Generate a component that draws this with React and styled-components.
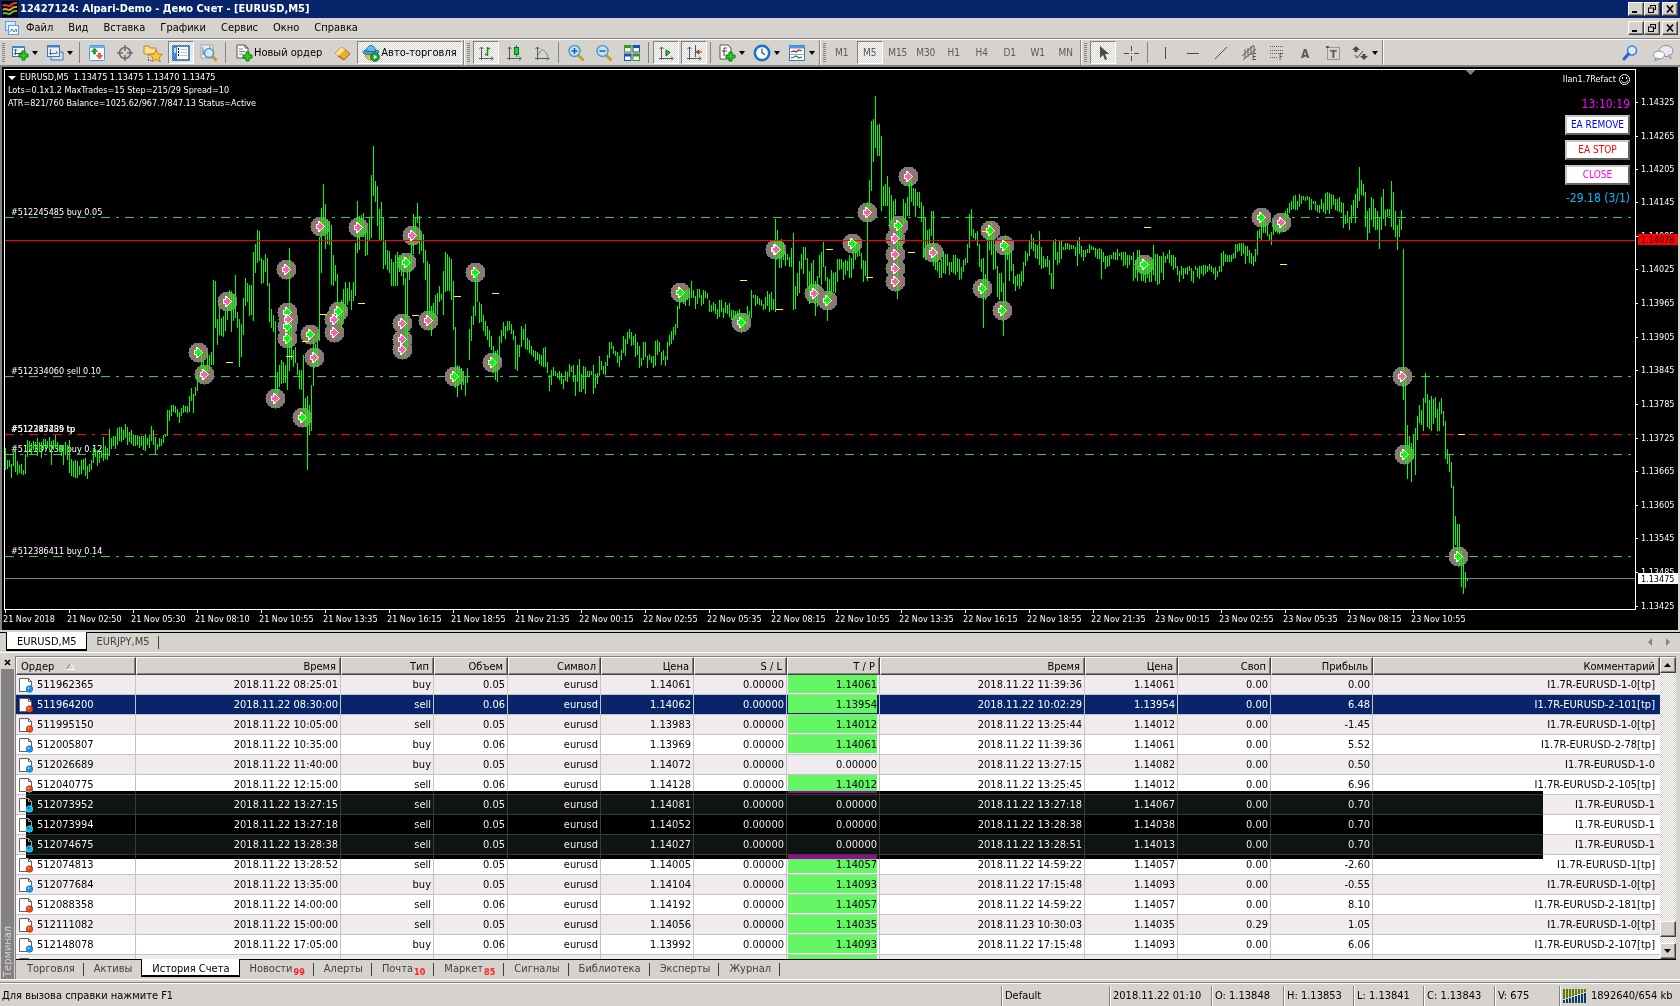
import React from "react";
import styled, { createGlobalStyle, css } from "styled-components";

const face = "#d6d3ce";
const shade = "#848284";
const dark = "#424142";
const navy = "#08246b";

const Global = createGlobalStyle`
  *, *::before, *::after { box-sizing: border-box; }
  body {
    margin: 0;
    background: ${face};
    color: #000;
    font: 11px/14px "DejaVu Sans Condensed", "Noto Sans", sans-serif;
  }
  button { font: inherit; color: inherit; padding: 0; margin: 0; border: 0; background: none; border-radius: 0; }
  svg { display: block; flex: none; }
`;

const raised = css`
  background: ${face};
  border: 1px solid;
  border-color: #fff ${dark} ${dark} #fff;
  box-shadow: inset -1px -1px 0 ${shade};
`;
const checker = css`
  background: repeating-conic-gradient(#fff 0 25%, ${face} 0 50%) 0 0 / 2px 2px;
`;

const Page = styled.div`
  min-height: 100vh;
  display: flex;
  flex-direction: column;
  overflow: hidden;
`;

/* ---------- title and menu ---------- */
const TitleBar = styled.header`
  height: 18px;
  display: flex;
  align-items: center;
  gap: 2px;
  padding: 0 2px;
  background: ${navy};
  color: #fff;
`;
const Title = styled.h1`
  flex: 1;
  margin: 0;
  font-size: 11px;
  line-height: 14px;
  font-weight: bold;
`;
const WindowButtons = styled.div`
  display: flex;
  height: 14px;
`;
const WinButton = styled.button`
  ${raised}
  width: 16px;
  height: 14px;
  display: grid;
  place-items: center;
  &:last-child { margin-left: 2px; }
`;
const MenuBar = styled.nav`
  height: 21px;
  display: flex;
  align-items: center;
  padding: 0 2px 0 5px;
  border-bottom: 1px solid ${shade};
`;
const MenuItems = styled.div`
  flex: 1;
  display: flex;
  gap: 1px;
`;
const MenuItem = styled.button`
  padding: 0 7px;
  line-height: 16px;
`;

/* ---------- toolbar ---------- */
const ToolBar = styled.div`
  height: 28px;
  display: flex;
  align-items: stretch;
  border-top: 1px solid #fff;
  border-bottom: 2px solid ${shade};
`;
const ToolGroup = styled.div`
  display: flex;
  align-items: center;
  border-right: 1px solid ${shade};
  box-shadow: 1px 0 0 #fff;
`;
const Grip = styled.i`
  width: 3px;
  height: 20px;
  margin: 0 2px 0 3px;
  background: repeating-linear-gradient(${shade} 0 1px, ${face} 1px 2px);
`;
const FirstGrip = styled(Grip)`
  margin-left: 2px;
`;
const Divider = styled.i`
  width: 1px;
  height: 21px;
  margin: 0 3px 0 2px;
  background: ${shade};
`;
const ToolButton = styled.button`
  height: 23px;
  min-width: 26px;
  margin: 0 1px;
  display: flex;
  align-items: center;
  justify-content: center;
  gap: ${(p) => (p.$drop ? "3px" : "1px")};
  color: ${(p) => (p.$muted ? "#5a5a5a" : "#000")};
  font-size: ${(p) => (p.$muted ? "10px" : "11px")};
  border: 1px solid transparent;
  ${(p) => p.$wide && css`padding: 0 4px;`}
  ${(p) => p.$drop && css`min-width: 33px;`}
  ${(p) => p.$pressed && css`${checker} border-color: ${shade} #fff #fff ${shade};`}
`;
const Caret = styled.i`
  border: 3px solid transparent;
  border-top: 4px solid #000;
  border-bottom: 0;
`;
const ToolSide = styled.div`
  flex: 1;
  display: flex;
  align-items: center;
  justify-content: flex-end;
  gap: 8px;
  padding-right: 6px;
`;

/* ---------- chart ---------- */
const ChartWindow = styled.section`
  position: relative;
  flex: 1;
  display: grid;
  grid-template-columns: minmax(0, 1fr) 42px;
  grid-template-rows: minmax(541px, 1fr) 20px;
  margin-right: 2px;
  padding: 2px 0 0 2px;
  border-left: 2px solid ${shade};
  background: #000;
  color: #fff;
`;
const Plot = styled.div`
  position: relative;
  border: 1px solid #fff;
  overflow: hidden;
`;
const Drawing = styled.svg`
  width: 100%;
  height: 100%;
  overflow: ${(p) => (p.$open ? "visible" : "hidden")};
  shape-rendering: crispEdges;
  text { font-size: 9px; fill: #fff; white-space: pre; }
`;
const TimeAxis = styled.div`
  grid-column: 1 / -1;
  overflow: visible;
`;
const Quote = styled.div`
  position: absolute;
  left: 3px;
  top: 1px;
  font-size: 9px;
  line-height: 13px;
`;
const QuoteHead = styled.div`
  display: flex;
  align-items: center;
  gap: 4px;
  white-space: pre;
`;
const QuoteCaret = styled.i`
  border: 4px solid transparent;
  border-top: 4px solid #fff;
  border-bottom: 0;
`;
const Expert = styled.div`
  position: absolute;
  right: 5px;
  top: 3px;
  width: 70px;
  display: flex;
  flex-direction: column;
  align-items: flex-end;
`;
const ExpertName = styled.div`
  display: flex;
  align-items: center;
  gap: 3px;
  font-size: 9px;
  line-height: 12px;
`;
const ExpertFigure = styled.div`
  width: 100%;
  text-align: right;
  white-space: nowrap;
  font-size: 12px;
  line-height: 14px;
  color: ${(p) => p.$color};
  margin: ${(p) => (p.$first ? "12px 0 4px" : "1px 0 0")};
`;
const ExpertButton = styled.button`
  width: 65px;
  height: 20px;
  margin-bottom: 5px;
  background: #fff;
  border: 2px solid;
  border-color: #c6c6c6 #636363 #636363 #c6c6c6;
  color: ${(p) => p.$color};
  font-size: 10px;
  line-height: 14px;
  white-space: nowrap;
`;

/* ---------- tabs ---------- */
const TabStrip = styled.div`
  display: flex;
  align-items: flex-start;
  border-top: 1px solid #000;
  color: #424142;
  height: ${(p) => p.$height}px;
  padding-left: ${(p) => p.$inset}px;
`;
const Tab = styled.button`
  position: relative;
  display: flex;
  height: 19px;
  padding: 2px 9px 0 10px;
  white-space: nowrap;
  ${(p) => p.$active
    ? css`
        height: ${p.$tall ? "19px" : "18px"};
        margin-top: -1px;
        padding-top: 3px;
        background: #fff;
        color: #000;
        border: solid #000;
        border-width: 0 1px 2px 1px;
      `
    : css`
        &::after {
          content: "";
          position: absolute;
          right: 0;
          top: 3px;
          height: 13px;
          border-right: 1px solid #424142;
          display: ${p.$beforeActive ? "none" : "block"};
        }
      `}
`;
const Badge = styled.b`
  margin-left: 1px;
  font: bold 9px/20px "DejaVu Sans Condensed", sans-serif;
  color: #ff2020;
`;
const ChartTabs = styled(TabStrip)`
  margin-top: 2px;
  border-bottom: 1px solid #fff;
`;
const TabScroll = styled.div`
  margin-left: auto;
  padding: 5px 10px 0 0;
  display: flex;
  gap: 14px;
`;

/* ---------- terminal ---------- */
const Terminal = styled.section`
  display: flex;
  margin-top: 3px;
  padding-right: 4px;
  height: 324px;
  border-bottom: 1px solid #fff;
`;
const Gutter = styled.aside`
  width: 15px;
  padding-left: 1px;
  display: flex;
  flex-direction: column;
`;
const CloseX = styled.button`
  height: 13px;
  width: 12px;
  display: grid;
  place-items: center;
`;
const GutterTitle = styled.div`
  flex: 1;
  width: 13px;
  background: ${shade};
  color: ${face};
  writing-mode: vertical-rl;
  transform: rotate(180deg);
  line-height: 13px;
  padding-top: 2px;
`;
const TerminalMain = styled.div`
  flex: 1;
  min-width: 0;
  border-left: 1px solid ${shade};
  border-top: 1px solid ${shade};
`;
const ListBox = styled.div`
  position: relative;
  height: 302px;
  overflow: hidden;
  display: flex;
`;
const TableWrap = styled.div`
  flex: 1;
  min-width: 0;
  overflow: hidden;
`;
const Table = styled.table`
  width: 100%;
  table-layout: fixed;
  border-collapse: separate;
  border-spacing: 0;
`;
const Th = styled.th`
  height: 18px;
  padding: ${(p) => (p.$left ? "1px 0 1px 4px" : "1px 4px 1px 0")};
  text-align: ${(p) => (p.$left ? "left" : "right")};
  font-weight: normal;
  line-height: 13px;
  background: ${face};
  border: 1px solid;
  border-color: #fff ${dark} ${dark} #fff;
  box-shadow: inset -1px -1px 0 ${shade};
`;
const SortMark = styled.svg`
  display: inline-block;
  margin-left: 12px;
`;
const Row = styled.tr`
  background: ${(p) => (p.$selected ? navy : p.$alt ? "#efebef" : "#fff")};
  color: ${(p) => (p.$selected ? "#fff" : "#000")};
`;
const Td = styled.td`
  height: 20px;
  padding: 0 2px 0 0;
  text-align: right;
  line-height: 18px;
  white-space: nowrap;
  border-right: 1px solid #c6c3c6;
  border-bottom: 1px solid #c6c3c6;
  &:last-child { border-right: 0; padding-right: 5px; }
`;
const OrderCell = styled.div`
  display: flex;
  align-items: center;
  gap: 4px;
  padding-left: 3px;
`;
const Target = styled.div`
  height: 18px;
  margin: 0 0 1px 1px;
  line-height: 20px;
  background: ${(p) => (p.$hit ? "#63f763" : "none")};
  color: ${(p) => (p.$hit ? "#000" : "inherit")};
`;
const Inverted = styled.div`
  position: absolute;
  left: 10px;
  right: 133px;
  top: 134px;
  height: 68px;
  background: #fff;
  mix-blend-mode: difference;
  pointer-events: none;
`;
const Scroll = styled.div`
  ${checker}
  width: 16px;
  display: flex;
  flex-direction: column;
`;
const ScrollButton = styled.button`
  ${raised}
  height: 16px;
  display: grid;
  place-items: center;
`;
const Thumb = styled(ScrollButton)`
  margin: auto 0 6px;
`;

/* ---------- status bar ---------- */
const StatusBar = styled.footer`
  display: flex;
  align-items: stretch;
  height: 24px;
  margin-top: 2px;
  padding: 3px 0 0;
  border-top: 1px solid ${shade};
  box-shadow: inset 0 1px 0 #fff;
`;
const StatusText = styled.div`
  flex: 1;
  padding: 3px 2px;
`;
const StatusPart = styled.div`
  width: ${(p) => p.$w}px;
  display: flex;
  gap: 4px;
  padding: 3px 0 0 3px;
  white-space: nowrap;
  border-left: 1px solid ${shade};
  box-shadow: inset 1px 0 0 #fff;
`;

/* ---------- icons ---------- */
const Svg = ({ w = 18, h = 18, children }) => (
  <svg width={w} height={h} viewBox={`0 0 ${w} ${h}`} fill="none" aria-hidden="true">{children}</svg>
);
const Plus = ({ x, y }) => (
  <path transform={`translate(${x} ${y})`} d="M4 1h3v3h3v3H7v3H4V7H1V4h3z" fill="#22d422" stroke="#087808" />
);
const Axes = () => (
  <path d="M4.5 3v13M2 14.5h14M2.5 5l2-2 2 2M14 12.5l2 2-2 2" stroke="#5a5a5a" />
);
const ic = {
  newChart: <Svg><rect x="1.5" y="2.5" width="12" height="10" fill="#e8f3ff" stroke="#3a78b8" /><path d="M1 3h13" stroke="#3a88d8" strokeWidth="2" /><path d="M4.500 5v6M3 9.500h8M10 8l1 1.500-1 1.500M3 6.500l1.500-1.500L6 6.500" stroke="#556" /><Plus x={7} y={6} /></Svg>,
  profiles: <Svg><path d="M5 8h12v8H5z" fill="#cfe4fa" stroke="#3a78b8" /><rect x="1.500" y="1.500" width="12" height="11" fill="#e8f3ff" stroke="#3a78b8" /><path d="M1 2.500h13" stroke="#3a88d8" strokeWidth="2" /><path d="M4.500 5v6M3 9.500h8M10 7l2 2.500" stroke="#667" /></Svg>,
  market: <Svg><rect x="1.500" y="1.500" width="15" height="15" rx="1" fill="#f4faff" stroke="#4a98e0" /><path d="M1 3h16" stroke="#68b0f0" strokeWidth="2" /><path d="M6.500 4l3 3.500h-2V10h-2V7.500h-2z" fill="#1fa83a" stroke="#0c7820" strokeWidth=".6" /><path d="M11.500 15l-3-3.500h2V9h2v2.500h2z" fill="#f06a3a" stroke="#c03a10" strokeWidth=".6" /></Svg>,
  cross: <Svg><circle cx="9" cy="9" r="5.500" stroke="#6a6a6a" strokeWidth="1.500" /><path d="M9 1v6M9 11v6M1 9h6M11 9h6" stroke="#6a6a6a" strokeWidth="1.500" /></Svg>,
  navigator: <Svg w={20} h={18}><path d="M1 2h5l1 2h6v6H1z" fill="#ffe08a" stroke="#b88a20" /><path d="M5.500 11v6M5 16.500h6" stroke="#555" strokeDasharray="1 1" /><path d="M13 6l2 4 4.500.4-3.300 3 1 4.300L13 15.400 8.800 17.700l1-4.300-3.300-3L11 10z" fill="#ffc93a" stroke="#a87a10" strokeWidth=".8" /></Svg>,
  terminal: <Svg w={18} h={16}><rect x="1" y="1" width="16" height="14" fill="#fff" stroke="#2060a8" strokeWidth="1.500" /><path d="M1 1h4v14H1z" fill="#3a88e0" /><path d="M2 3h2v5H2z" fill="#bfe0ff" /><path d="M6 3h1v2H6zM6 6h1v2H6zM6 9h1v2H6z" fill="#111" /><path d="M8 4.500h7M8 7.500h7M8 10.500h7" stroke="#b8c8dc" /></Svg>,
  tester: <Svg><path d="M1 1h12v13H1z" fill="#e8f3ff" stroke="#98a8b8" /><path d="M3 3v8M3 10l3-4 2 3M10 2v3" stroke="#778" /><circle cx="9" cy="9" r="4.500" fill="#cfe8ff" fillOpacity=".85" stroke="#5a92c0" strokeWidth="1.500" /><path d="M12.500 12.500l4 4" stroke="#c8962a" strokeWidth="3" /></Svg>,
  order: <Svg><path d="M2 1h8l3 3v10H2z" fill="#fff" stroke="#555" /><path d="M10 1v3h3" stroke="#555" /><path d="M4 5h4M4 7.500h6M4 10h4" stroke="#777" /><Plus x={7} y={7} /></Svg>,
  gold: <Svg><path d="M2 9l7-6 8 7-6 6z" fill="#e8b030" stroke="#98680a" /><path d="M2 9l7-6 3 3-7 6z" fill="#ffe28a" /><path d="M5 12l6 4 6-6" stroke="#98680a" /></Svg>,
  auto: <Svg><path d="M3 9c0 4 3 7 6 7s6-3 6-7z" fill="#f0c430" stroke="#b08a18" /><ellipse cx="9" cy="8" rx="8" ry="2.800" fill="#48a0d8" stroke="#1c6aa8" /><path d="M4.500 7.500C5 3 7 1.500 9 1.500s4 1.500 4.500 6z" fill="#68bce8" stroke="#1c6aa8" /><circle cx="13" cy="13" r="4.300" fill="#20a838" stroke="#0a7020" /><path d="M11.800 10.800l3.400 2.200-3.400 2.200z" fill="#fff" /></Svg>,
  bars: <Svg><Axes /><path d="M10.500 3v9M8 10.500h2M11 4.500h2" stroke="#149020" strokeWidth="1.500" /></Svg>,
  candle: <Svg><Axes /><path d="M11.500 1v12" stroke="#149020" /><rect x="9.500" y="3.500" width="4" height="7" fill="#22d040" stroke="#087018" /></Svg>,
  line: <Svg><Axes /><path d="M5 11c2-4 4-6 5-5s3 2 5 6" stroke="#30a030" /></Svg>,
  zoomIn: <Svg><path d="M11 11l5.500 5.500" stroke="#c8a020" strokeWidth="3" /><circle cx="7.500" cy="7" r="5.500" fill="#bfe2fa" stroke="#5a9ac8" strokeWidth="1.500" /><path d="M4.500 7h6M7.500 4v6" stroke="#1a5ca8" strokeWidth="1.500" /></Svg>,
  zoomOut: <Svg><path d="M11 11l5.500 5.500" stroke="#c8a020" strokeWidth="3" /><circle cx="7.500" cy="7" r="5.500" fill="#bfe2fa" stroke="#5a9ac8" strokeWidth="1.500" /><path d="M4.500 7h6" stroke="#1a5ca8" strokeWidth="1.500" /></Svg>,
  tile: <Svg><path d="M1 1h7.500v7.500H1zM9.500 9.500H17V17H9.500z" fill="#3a9a18" /><path d="M9.500 1H17v7.500H9.500zM1 9.500h7.500V17H1z" fill="#1c50c0" /><path d="M2 4h5.500v3.500H2zM10.500 4H16v3.500h-5.500zM2 12.500h5.500V16H2zM10.500 12.500H16V16h-5.500z" fill="#f4fbff" /></Svg>,
  autoScroll: <Svg><Axes /><path d="M9 6l4 2.500L9 12z" fill="#22c040" stroke="#087018" /></Svg>,
  shift: <Svg><Axes /><path d="M10.500 1v12" stroke="#2a5ca0" /><path d="M17 8h-3M14 6l-3 2 3 2z" fill="#c83810" stroke="#c83810" /></Svg>,
  indicator: <Svg><path d="M2 1h8l3 3v11H2z" fill="#fff" stroke="#555" /><path d="M6 12V4h3M4 7h5" stroke="#444" /><Plus x={7} y={7} /></Svg>,
  clock: <Svg><circle cx="9" cy="9" r="7.200" fill="#f4faff" stroke="#1c70c8" strokeWidth="2.500" /><path d="M9 4.500V9l3 1.500" stroke="#445" strokeWidth="1.200" /></Svg>,
  template: <Svg><rect x="1.500" y="1.500" width="15" height="15" fill="#fff" stroke="#3a78b8" /><path d="M1 3h16" stroke="#4a98e8" strokeWidth="3" /><path d="M2 10.500h14" stroke="#88b0d8" /><path d="M3 8l3-1 2 1 3-2 3 1" stroke="#a02a10" strokeWidth="1.300" /><path d="M3 14l3-1 2-1 3 2 3-1" stroke="#18882a" strokeWidth="1.300" /></Svg>,
  cursor: <Svg><path d="M6 2v12l3-3 2 5 2-1-2-5h4z" fill="#4a4a4a" /></Svg>,
  crosshair: <Svg><path d="M9.500 2v5M9.500 12v5M2 9.500h5M12 9.500h5M9 9.500h1" stroke="#4a4a4a" /></Svg>,
  vline: <Svg><path d="M9.500 3v12" stroke="#4a4a4a" /></Svg>,
  hline: <Svg><path d="M3 9.500h12" stroke="#4a4a4a" /></Svg>,
  slope: <Svg><path d="M3 15L15 3" stroke="#4a4a4a" /></Svg>,
  channel: <Svg><path d="M2 12L14 1M3 16L16 5M5 5v9M8 4v9M11 2v9M14 2v7" stroke="#5a5a5a" /><text x="12" y="16" fontSize="8" fill="#333">E</text></Svg>,
  fibo: <Svg><path d="M2 2.500h13M2 6.500h13M2 9.500h13M2 13.500h8" stroke="#5a5a5a" strokeDasharray="1 1" /><text x="11" y="16" fontSize="8" fill="#333">F</text></Svg>,
  letter: <Svg><text x="5" y="14" fontSize="12" fontWeight="bold" fill="#5a5a5a">A</text></Svg>,
  label: <Svg><rect x="3.500" y="3.500" width="12" height="12" stroke="#5a5a5a" strokeDasharray="1 1" /><path d="M2 2h3v2H2z" fill="#5a5a5a" /><text x="6" y="14" fontSize="11" fontWeight="bold" fill="#5a5a5a">T</text></Svg>,
  shapes: <Svg><path d="M5 2l4 4H6.500v2h-3V6H1zM13 16l-4-4h2.500v-2h3v2H17z" fill="#4a4a4a" /><path d="M4 11l2 3 6-7" stroke="#4a4a4a" /></Svg>,
  search: <Svg><circle cx="11" cy="6.500" r="4.500" fill="#d8ecff" stroke="#3a7ae0" strokeWidth="1.500" /><path d="M7.500 10L3 15" stroke="#2a60d0" strokeWidth="3" strokeLinecap="round" /></Svg>,
  chat: <Svg w={22} h={18}><ellipse cx="14" cy="7" rx="7" ry="5.500" fill="#e8e8ee" stroke="#909098" /><path d="M16 12l3 3-1-5z" fill="#e8e8ee" stroke="#909098" /><ellipse cx="7" cy="11" rx="5.500" ry="4" fill="#fafaff" stroke="#909098" /><path d="M4 14l-1 3 4-2z" fill="#fafaff" stroke="#909098" /></Svg>,
};

const AppIcon = () => (
  <Svg w={16} h={16}>
    <rect width="16" height="16" fill="#000" />
    <path d="M1 5c3-3 5 2 8-1s4-2 6-2" stroke="#e83a20" strokeWidth="2" />
    <path d="M1 9c3-3 5 2 8-1s4-2 6-2" stroke="#e8a020" strokeWidth="2" />
    <path d="M1 13c3-3 5 2 8-1s4-2 6-2" stroke="#58c030" strokeWidth="2" />
  </Svg>
);
const DocIcon = () => (
  <Svg w={14} h={14}>
    <rect x=".5" y=".5" width="10" height="9" fill="#d8ecff" stroke="#5aa0e0" />
    <rect x="3.500" y="4.500" width="10" height="9" fill="#f4faff" stroke="#5aa0e0" />
    <path d="M5 11l2-3 2 3 2-3 1 3" stroke="#3a80c8" />
  </Svg>
);
const WinControls = () => (
  <WindowButtons>
    <WinButton aria-label="Свернуть"><Svg w={12} h={10}><path d="M2 8h5" stroke="#000" strokeWidth="2" /></Svg></WinButton>
    <WinButton aria-label="Восстановить"><Svg w={12} h={10}><path d="M4 1.500h6M4.500 1v2M9.500 1v5M8 5.500h2M2 4h6M2.500 4v5M7.500 4v5M2 8.500h6" stroke="#000" /></Svg></WinButton>
    <WinButton aria-label="Закрыть"><Svg w={12} h={10}><path d="M3 1.500l6 7M9 1.500l-6 7" stroke="#000" strokeWidth="1.600" /></Svg></WinButton>
  </WindowButtons>
);
const OrderIcon = ({ sell }) => (
  <Svg w={14} h={16}>
    <path d="M.5 1.500h9l3 3v10H.5z" fill="#fff" stroke="#636163" />
    <path d="M9.500 1.500v3h3" stroke="#636163" />
    <circle cx="10.500" cy="12" r="3.300" fill={sell ? "#f04a10" : "#189ae8"} stroke={sell ? "#a82a08" : "#0868b0"} strokeWidth=".7" />
    <circle cx="9.500" cy="11" r="1" fill={sell ? "#ff9a70" : "#90d8ff"} />
  </Svg>
);

const Tool = ({ name, drop, pressed, title }) => (
  <ToolButton $drop={drop} $pressed={pressed} aria-label={title || name}>
    {ic[name]}
    {drop && <Caret />}
  </ToolButton>
);

/* ---------- chart data ---------- */
// High/low pairs of the M5 bars, "x high low", in thirds of a pixel vertically
// and 2.8 units per pixel horizontally, counted from each block's origin.
const blocks = [
  {
    ox: 0, oy: 120,
    bars: "15 985 1052,21 1020 1047,26 1022 1042,32 1033 1074,38 997 1040,43 992 1056,49 1025 1067,54 1035 1060,60 1032 1062,65 1050 1067,71 1003 1064,77 960 1012,82 963 990,88 970 1005,94 963 992,99 967 994,105 954 1010,110 967 998,116 966 1014,122 958 992,127 959 989,133 963 985,138 953 991,144 963 1037,150 960 992,155 945 985,161 966 989,167 976 997,172 976 1010,178 976 1037,183 967 1006,189 976 1021,194 960 1061,200 1017 1069,206 1024 1072,211 1022 1074,217 1025 1074,222 1040 1066,228 1020 1062,234 1017 1052,239 1016 1070,245 1040 1079,250 1032 1056,256 1020 1051,262 985 1030,267 988 1012,273 990 1040,278 996 1031,284 990 1015,290 952 1025,295 980 1018,301 985 1022,306 927 1008,312 955 987,318 950 979,323 950 989,329 925 976,334 921 963,340 922 966,346 930 960,351 914 955,357 922 977,362 938 968,368 930 973,374 947 980,379 945 978,385 945 976,390 950 984,396 948 980,402 948 990,407 944 995,413 955 975,419 945 985,424 920 963,430 932 975,435 952 1003,441 972 990,446 956 982,452 957 978,458 945 970,463 943 953,469 872 948,474 872 905,480 855 890,486 855 876,491 858 880,497 868 892,502 876 911,508 865 890,514 855 880,519 858 878,525 858 880,530 828 878,536 804 845,542 822 880,547 803 830,553 765 815,558 765 775,564 690 785,570 720 780,575 740 775,581 700 770,586 705 750,592 696 735,598 480 735,603 483 625,609 597 675,614 550 645,620 595 650,625 590 653,631 575 635,637 540 600,642 510 570,648 515 638,653 522 605,659 465 596,665 576 625,670 598 741,676 612 712,681 535 645,687 475 560,692 490 548,698 497 588,704 495 585,709 398 603,715 373 460,721 330 430,726 333 425,732 414 492,737 420 490,743 402 457,749 414 500,754 490 608,760 567 625,765 585 638,771 605 861,777 757 830,782 735 803,788 720 792,793 728 790,799 735 790,805 575 812,810 384 755,816 592 720,821 690 742,827 683 730,833 730 765,838 750 808,844 750 812,849 705 870,855 835 922,861 830 1050,866 855 945,872 795 935,877 655 800,883 672 740,889 640 740,894 353 664,900 264 459,905 192 341,911 252 387,917 300 372,922 305 375,928 317 497,933 405 498,939 436 484,945 462 615,950 560 610,956 540 625,961 507 600,967 486 580,973 505 555,978 486 545,984 512 572,989 486 545,995 369 528,1001 243 400,1006 290 392,1012 285 345,1017 280 353,1023 315 410,1029 335 405,1034 295 360,1040 165 356,1046 78 228,1051 183 246,1057 198 320,1062 267 360,1068 246 360,1073 292 447,1079 362 435,1085 390 452,1090 393 459,1096 417 500,1101 426 500,1107 405 500,1113 396 498,1118 405 457,1124 410 470,1129 403 497,1135 474 712,1141 430 685,1146 410 480,1152 370 455,1157 282 402,1163 292 345,1168 249 310,1174 288 402,1180 345 395,1185 342 430,1191 390 482,1197 424 590,1202 432 585,1208 558 650,1214 550 605,1219 525 597,1225 520 585,1230 498 548,1236 522 540,1242 454 585,1247 396 517,1253 402 514,1258 411 515,1264 417 540,1270 483 632,1275 622 806,1281 735 833,1287 738 788,1292 745 812,1298 755 797,1303 768 830,1309 745 790,1315 627 720,1320 588 665,1326 558 615,1331 460 588,1337 465 548,1343 548 611,1348 552 608,1354 587 635,1359 605 650,1365 618 660,1371 632 682,1376 650 690,1382 678 760,1387 695 780,1393 690 788,1398 650 726,1404 632 670,1410 608 650,1415 618 658,1421 603 635,1426 605 632,1432 612 642,1438 630 662,1443 648 748,1449 675 755,1454 675 712,1460 620 682,1465 628 660,1471 614 687,1477 655 690,1482 660 700,1488 678 707,1494 692 712,1499 695 725,1505 697 720,1510 702 732,1516 706 738,1522 685 742,1527 683 743,1533 727 760,1538 765 815,1544 752 797,1550 742 770,1555 753 768,1561 760 775,1566 755 780",
    marks: "557 698 g,573 762 p,636 543 p,803 447 p,804 578 g,804 618 g,809 598 p,804 654 g,770 834 p,848 891 g,870 642 g,881 711 p,898 318 p,1005 321 p,949 573 g,937 597 p,937 636 p,1139 426 g,1156 345 p,1128 609 p,1128 658 p,1128 687 p,1201 600 p,1273 768 g,1330 456 g,1380 726 g",
    dashes: "643 727,810 709,855 664,906 583,1011 550,1163 586,1281 529,1387 520",
  },
  {
    ox: 560, oy: 80,
    bars: "4 880 912,10 897 927,15 875 903,21 878 906,26 852 892,32 858 876,38 855 908,43 885 950,49 855 908,54 837 938,60 882 936,65 858 927,71 861 944,77 873 888,82 873 890,88 873 887,94 855 944,99 882 926,105 880 912,110 828 888,116 843 870,122 858 882,127 846 885,133 825 858,138 788 834,144 786 807,150 798 822,155 815 828,161 816 850,166 828 861,172 810 840,178 768 820,183 777 828,189 756 792,194 747 777,200 756 800,206 768 797,211 762 833,217 786 825,222 800 866,228 834 858,234 786 840,239 786 831,245 828 866,250 822 840,256 828 850,262 828 864,267 783 858,273 780 825,278 786 816,284 816 855,290 812 840,295 828 858,301 788 840,306 765 798,312 753 792,318 741 780,323 732 765,329 678 744,334 630 687,340 632 668,346 636 672,351 635 678,357 627 660,362 630 678,368 603 654,374 630 655,379 650 687,385 627 672,390 627 655,396 645 678,401 630 672,407 633 655,413 640 658,418 660 698,424 675 696,430 666 693,435 672 702,441 687 717,446 660 711,452 660 697,457 684 714,463 668 700,469 675 703,474 669 712,480 690 720,485 690 722,491 693 718,497 695 722,502 687 745,508 700 759,514 705 747,519 708 735,525 678 738,530 693 712,536 630 714,542 645 655,547 645 678,553 648 672,558 654 675,564 660 680,570 672 690,575 651 687,581 633 678,586 642 696,592 636 690,597 657 690,603 417 696,609 450 538,614 480 564,620 477 564,626 490 540,631 515 560,637 523 542,642 531 561,648 504 561,653 459 692,659 618 688,664 580 650,670 543 640,676 522 567,681 501 582,687 501 540,693 534 618,698 573 672,704 549 652,709 540 655,715 603 708,720 588 682,726 525 596,732 516 615,737 486 563,743 558 603,749 591 723,754 598 655,760 570 648,766 579 636,771 576 640,777 537 606,782 537 570,788 537 567,793 546 600,799 540 585,805 543 573,810 525 594,816 534 594,821 498 567,827 474 542,833 480 533,838 492 528,844 519 567,849 540 606,855 543 590,861 366 603,866 300 412,872 123 333,877 117 246,883 48 204,889 135 228,894 132 228,900 168 393,905 318 380,911 312 380,917 288 380,922 321 443,928 345 432,933 363 441,939 357 405,945 420 657,950 425 500,956 440 508,961 357 432,967 369 430,973 351 408,978 290 408,984 297 366,989 324 380,995 327 412,1001 336 380,1006 336 384,1012 366 426,1017 380 534,1023 412 540,1029 450 498,1034 447 528,1040 393 468,1045 393 560,1051 500 570,1057 510 575,1062 546 594,1068 537 594,1073 513 579,1079 522 582,1085 522 558,1090 546 585,1096 546 578,1101 525 579,1107 525 585,1113 534 578,1118 537 600,1124 561 597,1129 540 576,1135 534 555,1141 492 549,1146 402 504,1152 387 468,1157 447 475,1163 459 480,1168 453 498,1174 492 561,1180 537 576,1185 534 746,1191 582 660,1197 455 630,1202 460 510,1208 425 525,1213 463 570,1219 492 567,1225 558 651,1230 579 660,1236 579 636,1241 609 770,1247 465 690,1253 490 540,1258 500 603,1264 510 575,1269 552 612,1275 588 633,1281 582 618,1286 582 627,1292 573 620,1297 546 606,1303 513 560,1309 519 543,1314 480 528,1320 462 507,1325 474 513,1331 492 534,1337 495 537,1342 453 555,1348 501 567,1353 528 564,1359 537 561,1365 528 561,1370 540 585,1376 579 627,1381 483 627,1387 477 540,1393 516 555,1398 483 549,1404 483 537,1409 501 510,1415 489 510,1421 489 507,1426 492 510,1432 495 507,1437 495 508,1443 501 528,1449 480 558,1454 471 522,1460 498 531,1465 510 543,1471 510 531,1477 507 519,1482 492 519,1488 498 510,1493 501 512,1499 504 531,1505 507 537,1510 504 537,1516 507 597,1521 516 546,1527 528 567,1533 528 562,1538 525 558,1544 525 537,1549 516 537,1555 516 540,1561 507 540,1566 520 528",
    marks: "338 636 g,507 726 g,602 507 g,607 507 p,713 639 p,748 662 g,820 489 g,860 396 p,938 474 p,949 435 g,938 522 p,938 564 p,938 603 p,977 288 p,1045 516 p,1184 624 g,1206 450 g,1245 495 g,1240 690 g",
    dashes: "514 601,614 688,754 508,866 592,984 517,1190 454",
  },
  {
    ox: 1120, oy: 140,
    bars: "4 338 360,10 338 380,15 338 375,21 345 384,26 345 375,32 350 360,38 336 423,43 360 415,49 330 423,54 330 400,60 355 423,65 355 423,71 365 429,77 360 415,82 365 426,88 360 426,94 315 405,99 342 423,105 342 435,110 350 432,116 350 400,121 336 420,127 348 370,133 343 357,138 330 370,144 345 378,150 345 390,155 351 384,161 379 405,166 393 426,172 378 405,178 384 417,183 384 402,189 383 405,194 378 393,200 384 424,206 393 429,211 378 390,217 384 411,222 378 417,228 378 402,234 375 408,239 375 402,245 378 396,250 372 392,256 378 396,262 384 402,267 381 420,273 393 411,278 378 398,284 339 398,290 333 380,295 342 368,301 345 368,306 345 366,312 345 368,318 339 357,323 312 354,329 312 336,335 309 333,340 309 348,346 309 342,351 318 374,357 318 350,362 330 370,368 339 372,374 350 380,379 327 368,385 273 345,390 267 294,396 245 300,402 243 279,407 243 279,413 255 288,418 282 300,424 276 315,430 240 285,435 255 276,441 250 280,446 250 282,452 238 275,457 240 276,463 215 264,469 205 235,474 190 219,480 183 210,486 170 207,491 165 210,497 183 210,502 162 201,508 170 192,514 168 180,519 171 183,525 168 180,530 171 210,536 177 210,542 183 192,547 183 210,553 195 216,558 195 219,564 177 207,570 189 216,575 159 222,581 156 210,586 159 222,592 162 207,597 165 195,603 177 210,608 177 213,614 171 216,620 186 219,625 189 264,631 225 252,637 213 250,642 231 270,648 195 250,653 180 230,659 162 250,664 144 204,670 81 183,676 120 165,681 132 168,687 156 261,693 213 300,698 204 279,704 171 240,709 177 261,715 204 270,720 213 270,726 231 327,732 171 270,737 147 237,743 210 260,749 207 232,754 207 230,760 123 261,765 156 270,771 213 291,777 255 330,782 237 291,788 210 270,793 327 780,799 700 970,804 855 1017,810 888 960,816 910 1026,821 884 955,827 864 1005,833 828 900,838 795 850,844 810 855,849 774 873,855 699 790,861 762 861,866 780 867,872 768 873,877 777 852,883 771 834,889 807 873,894 786 873,900 774 822,905 813 858,911 843 957,917 927 972,922 945 996,928 966 1044,933 1038 1235,939 1128 1215,944 1152 1230,950 1152 1280,956 1230 1341,961 1250 1362,967 1296 1344,973 1314 1323",
    marks: "69 372 g,395 231 g,452 246 p,792 708 p,797 942 g,948 1248 g",
    dashes: "77 262,458 373,956 883",
  },
];
const read = (block, key) =>
  block[key].split(",").map((item) => {
    const [x, y, z] = item.split(" ");
    return { x: block.ox + x / 2.8, y: block.oy + y / 3, z, oy: block.oy };
  });
const barPath = blocks
  .flatMap((b) => read(b, "bars"))
  .map((b) => `M${5.5 + 2 * Math.round((b.x - 5.5) / 2)} ${Math.floor(b.y)}V${Math.floor(b.oy + b.z / 3)}`)
  .join("");
const marks = blocks.flatMap((b) => read(b, "marks")).map((m) => ({ x: Math.floor(m.x), y: Math.floor(m.y), buy: m.z === "g" }));
const dashes = blocks.flatMap((b) => read(b, "dashes")).map((m) => ({ x: Math.floor(m.x), y: Math.floor(m.y) }));

const levels = [
  { y: 217, color: "#32cd32", label: ["#512245485 buy 0.05"] },
  { y: 376, color: "#32cd32", label: ["#512334060 sell 0.10"] },
  { y: 434, color: "#ff0000", label: ["#512245485 tp", "#512387239 tp"] },
  { y: 454, color: "#32cd32", label: ["#512337239 buy 0.12"] },
  { y: 556, color: "#32cd32", label: ["#512386411 buy 0.14"] },
];
const prices = [
  ["1.14325", 102], ["1.14265", 136], ["1.14205", 169], ["1.14145", 202], ["1.14085", 236],
  ["1.14025", 269], ["1.13965", 303], ["1.13905", 337], ["1.13845", 370], ["1.13785", 404],
  ["1.13725", 438], ["1.13665", 471], ["1.13605", 505], ["1.13545", 538], ["1.13485", 572], ["1.13425", 606],
];
const times = [
  "21 Nov 2018", "21 Nov 02:50", "21 Nov 05:30", "21 Nov 08:10", "21 Nov 10:55", "21 Nov 13:35", "21 Nov 16:15", "21 Nov 18:55", "21 Nov 21:35",
  "22 Nov 00:15", "22 Nov 02:55", "22 Nov 05:35", "22 Nov 08:15", "22 Nov 10:55", "22 Nov 13:35", "22 Nov 16:15", "22 Nov 18:55", "22 Nov 21:35",
  "23 Nov 00:15", "23 Nov 02:55", "23 Nov 05:35", "23 Nov 08:15", "23 Nov 10:55",
];

const Chart = () => (
  <ChartWindow>
    <Plot>
      <Drawing>
        <g transform="translate(-5 -70)">
          {levels.map((l) => (
            <g key={l.y}>
              <line x1="5" x2="1631" y1={l.y + 0.5} y2={l.y + 0.5} stroke={l.color} strokeDasharray="9 6 3 6" />
              {l.label.map((t) => <text key={t} x="11" y={l.y - 2}>{t}</text>)}
            </g>
          ))}
          <path d="M5 578.500H1635" stroke="#708090" />
          {marks.map((m, i) => (
            <circle key={i} cx={m.x + 0.5} cy={m.y + 0.5} r="9.500" fill="#917766" stroke="#708090" />
          ))}
          <path d={barPath} stroke="#00ff00" />
          <path d="M5 240.500H1635" stroke="#ff0000" />
          {marks.map((m, i) => (
            <g key={i} transform={`translate(${m.x} ${m.y})`}>
              <path d="M-4-2H-2V-5H0L5 .5 0 6H-2V3H-4z" fill="#fff" />
              <path d="M-3-1H-1V-3H0L4 .5 0 4H-1V2H-3z" fill={m.buy ? "#00ff00" : "#ff5fb4"} />
            </g>
          ))}
          {dashes.map((d, i) => <rect key={i} x={d.x - 3} y={d.y} width="7" height="1" fill="#ffff00" />)}
          <path d="M1465 70h10l-5 5z" fill="#708090" />
        </g>
      </Drawing>
      <Quote>
        <QuoteHead><QuoteCaret />{"EURUSD,M5  1.13475 1.13475 1.13470 1.13475"}</QuoteHead>
        <div>Lots=0.1x1.2 MaxTrades=15 Step=215/29 Spread=10</div>
        <div>ATR=821/760 Balance=1025.62/967.7/847.13 Status=Active</div>
      </Quote>
      <Expert>
        <ExpertName>
          Ilan1.7Refact
          <Svg w={11} h={11}><circle cx="5.500" cy="5.500" r="5" stroke="#fff" /><path d="M3.500 3v2M7.500 3v2M2.500 6.500c1 3 5 3 6 0" stroke="#fff" /></Svg>
        </ExpertName>
        <ExpertFigure $first $color="#ff00ff">13:10:19</ExpertFigure>
        <ExpertButton $color="#0000ff">EA REMOVE</ExpertButton>
        <ExpertButton $color="#ff0000">EA STOP</ExpertButton>
        <ExpertButton $color="#ff00ff">CLOSE</ExpertButton>
        <ExpertFigure $color="#00bfff">-29.18 (3/1)</ExpertFigure>
      </Expert>
    </Plot>
    <Drawing $open>
      <g transform="translate(0 -69)">
        {prices.map(([p, y]) => (
          <g key={p}>
            <path d={`M0 ${y + 0.5}h2`} stroke="#fff" />
            <text x="5" y={y + 3}>{p}</text>
          </g>
        ))}
        <rect x="2" y="234" width="40" height="11" fill="#ff0000" />
        <text x="5" y="243" style={{ fill: "#000" }}>1.14078</text>
        <rect x="2" y="573" width="40" height="11" fill="#fff" />
        <text x="5" y="582" style={{ fill: "#000" }}>1.13475</text>
      </g>
    </Drawing>
    <TimeAxis>
      <Drawing $open>
        {times.map((t, i) => (
          <g key={t}>
            <path d={`M${1.5 + i * 64} 0v3`} stroke="#fff" />
            <text x={i * 64 - 1} y="12">{t}</text>
          </g>
        ))}
      </Drawing>
    </TimeAxis>
  </ChartWindow>
);

/* ---------- table data ---------- */
const columns = [
  ["Ордер", 120], ["Время", 205], ["Тип", 93], ["Объем", 74], ["Символ", 93], ["Цена", 93], ["S / L", 93],
  ["T / P", 93], ["Время", 205], ["Цена", 93], ["Своп", 93], ["Прибыль", 102], ["Комментарий"],
];
const d = "2018.11.22 ";
const rows = [
  ["511962365", d + "08:25:01", "buy", "0.05", "1.14061", "1.14061", d + "11:39:36", "1.14061", "0.00", "0.00", "I1.7R-EURUSD-1-0[tp]"],
  ["511964200", d + "08:30:00", "sell", "0.06", "1.14062", "1.13954", d + "10:02:29", "1.13954", "0.00", "6.48", "I1.7R-EURUSD-2-101[tp]"],
  ["511995150", d + "10:05:00", "sell", "0.05", "1.13983", "1.14012", d + "13:25:44", "1.14012", "0.00", "-1.45", "I1.7R-EURUSD-1-0[tp]"],
  ["512005807", d + "10:35:00", "buy", "0.06", "1.13969", "1.14061", d + "11:39:36", "1.14061", "0.00", "5.52", "I1.7R-EURUSD-2-78[tp]"],
  ["512026689", d + "11:40:00", "buy", "0.05", "1.14072", "0.00000", d + "13:27:15", "1.14082", "0.00", "0.50", "I1.7R-EURUSD-1-0"],
  ["512040775", d + "12:15:00", "sell", "0.06", "1.14128", "1.14012", d + "13:25:45", "1.14012", "0.00", "6.96", "I1.7R-EURUSD-2-105[tp]"],
  ["512073952", d + "13:27:15", "sell", "0.05", "1.14081", "0.00000", d + "13:27:18", "1.14067", "0.00", "0.70", "I1.7R-EURUSD-1"],
  ["512073994", d + "13:27:18", "sell", "0.05", "1.14052", "0.00000", d + "13:28:38", "1.14038", "0.00", "0.70", "I1.7R-EURUSD-1"],
  ["512074675", d + "13:28:38", "sell", "0.05", "1.14027", "0.00000", d + "13:28:51", "1.14013", "0.00", "0.70", "I1.7R-EURUSD-1"],
  ["512074813", d + "13:28:52", "sell", "0.05", "1.14005", "1.14057", d + "14:59:22", "1.14057", "0.00", "-2.60", "I1.7R-EURUSD-1[tp]"],
  ["512077684", d + "13:35:00", "buy", "0.05", "1.14104", "1.14093", d + "17:15:48", "1.14093", "0.00", "-0.55", "I1.7R-EURUSD-1-0[tp]"],
  ["512088358", d + "14:00:00", "sell", "0.06", "1.14192", "1.14057", d + "14:59:22", "1.14057", "0.00", "8.10", "I1.7R-EURUSD-2-181[tp]"],
  ["512111082", d + "15:00:00", "sell", "0.05", "1.14056", "1.14035", "2018.11.23 10:30:03", "1.14035", "0.29", "1.05", "I1.7R-EURUSD-1-0[tp]"],
  ["512148078", d + "17:05:00", "buy", "0.06", "1.13992", "1.14093", d + "17:15:48", "1.14093", "0.00", "6.06", "I1.7R-EURUSD-2-107[tp]"],
];

const History = () => (
  <Table>
    <colgroup>
      {columns.map(([, w], i) => <col key={i} style={w ? { width: w } : undefined} />)}
    </colgroup>
    <thead>
      <tr>
        {columns.map(([name], i) => (
          <Th key={i} $left={i === 0}>
            {name}
            {i === 0 && <SortMark width="9" height="8"><path d="M4.500 1L.5 7.500" stroke={shade} /><path d="M4.500 1l4 6.500h-8" stroke="#fff" fill="none" /></SortMark>}
          </Th>
        ))}
      </tr>
    </thead>
    <tbody>
      {rows.map(([order, open, type, lot, price, tp, close, exit, swap, profit, note], i) => (
        <Row key={order} $alt={i % 2 === 0} $selected={i === 1}>
          <Td><OrderCell><OrderIcon sell={type === "sell"} />{order}</OrderCell></Td>
          <Td>{open}</Td>
          <Td>{type}</Td>
          <Td>{lot}</Td>
          <Td>eurusd</Td>
          <Td>{price}</Td>
          <Td>0.00000</Td>
          <Td><Target $hit={tp !== "0.00000"}>{tp}</Target></Td>
          <Td>{close}</Td>
          <Td>{exit}</Td>
          <Td>{swap}</Td>
          <Td>{profit}</Td>
          <Td>{note}</Td>
        </Row>
      ))}
      <Row $alt>
        {columns.map((c, i) => (
          <Td key={i}>{i === 0 ? <OrderCell><OrderIcon /></OrderCell> : i === 7 ? <Target $hit /> : null}</Td>
        ))}
      </Row>
    </tbody>
  </Table>
);

const terminalTabs = [
  ["Торговля"], ["Активы"], ["История Счета"], ["Новости", "99"], ["Алерты"], ["Почта", "10"],
  ["Маркет", "85"], ["Сигналы"], ["Библиотека"], ["Эксперты"], ["Журнал"],
];
const ohlc = [["O: 1.13848", 72], ["H: 1.13853", 70], ["L: 1.13841", 70], ["C: 1.13843", 71], ["V: 675", 65]];

export default function App() {
  return (
    <Page>
      <Global />
      <TitleBar>
        <AppIcon />
        <Title>12427124: Alpari-Demo - Демо Счет - [EURUSD,M5]</Title>
        <WinControls />
      </TitleBar>
      <MenuBar>
        <DocIcon />
        <MenuItems>
          {["Файл", "Вид", "Вставка", "Графики", "Сервис", "Окно", "Справка"].map((m) => <MenuItem key={m}>{m}</MenuItem>)}
        </MenuItems>
        <WinControls />
      </MenuBar>
      <ToolBar>
        <ToolGroup>
          <FirstGrip />
          <Tool name="newChart" drop />
          <Tool name="profiles" drop />
          <Divider />
          <Tool name="market" />
          <Tool name="cross" />
          <Tool name="navigator" />
          <Tool name="terminal" pressed />
          <Tool name="tester" />
          <Divider />
          <ToolButton $wide>{ic.order}Новый ордер</ToolButton>
          <Tool name="gold" />
          <ToolButton $wide $pressed>{ic.auto}Авто-торговля</ToolButton>
        </ToolGroup>
        <ToolGroup>
          <Grip />
          <Tool name="bars" pressed />
          <Tool name="candle" />
          <Tool name="line" />
          <Divider />
          <Tool name="zoomIn" />
          <Tool name="zoomOut" />
          <Tool name="tile" />
          <Divider />
          <Tool name="autoScroll" pressed />
          <Tool name="shift" pressed />
          <Divider />
          <Tool name="indicator" drop />
          <Tool name="clock" drop />
          <Tool name="template" drop />
        </ToolGroup>
        <ToolGroup>
          <Grip />
          {["M1", "M5", "M15", "M30", "H1", "H4", "D1", "W1", "MN"].map((p) => (
            <ToolButton key={p} $muted $pressed={p === "M5"}>{p}</ToolButton>
          ))}
        </ToolGroup>
        <ToolGroup>
          <Grip />
          <Tool name="cursor" pressed />
          <Tool name="crosshair" />
          <Divider />
          <Tool name="vline" />
          <Tool name="hline" />
          <Tool name="slope" />
          <Tool name="channel" />
          <Tool name="fibo" />
          <Tool name="letter" />
          <Tool name="label" />
          <Tool name="shapes" drop />
        </ToolGroup>
        <ToolSide>
          <Tool name="search" />
          {ic.chat}
        </ToolSide>
      </ToolBar>

      <Chart />

      <ChartTabs $height={21} $inset={6}>
        <Tab $active $tall>EURUSD,M5</Tab>
        <Tab>EURJPY,M5</Tab>
        <TabScroll>
          <Svg w={4} h={8}><path d="M4 0v8L0 4z" fill={shade} /></Svg>
          <Svg w={4} h={8}><path d="M0 0v8l4-4z" fill={shade} /></Svg>
        </TabScroll>
      </ChartTabs>

      <Terminal>
        <Gutter>
          <CloseX aria-label="Закрыть"><Svg w={7} h={7}><path d="M1 1l5 5M6 1L1 6" stroke="#000" strokeWidth="1.600" /></Svg></CloseX>
          <GutterTitle>Терминал</GutterTitle>
        </Gutter>
        <TerminalMain>
          <ListBox>
            <TableWrap><History /></TableWrap>
            <Inverted />
            <Scroll>
              <ScrollButton aria-label="Вверх"><Svg w={8} h={4}><path d="M0 4h7L3.500 0z" fill="#000" /></Svg></ScrollButton>
              <Thumb aria-label="Ползунок" />
              <ScrollButton aria-label="Вниз"><Svg w={8} h={4}><path d="M0 0h7L3.500 4z" fill="#000" /></Svg></ScrollButton>
            </Scroll>
          </ListBox>
          <TabStrip $height={20} $inset={1}>
            {terminalTabs.map(([name, n], i) => (
              <Tab key={name} $active={i === 2} $beforeActive={i === 1}>
                {name}
                {n && <Badge>{n}</Badge>}
              </Tab>
            ))}
          </TabStrip>
        </TerminalMain>
      </Terminal>

      <StatusBar>
        <StatusText>Для вызова справки нажмите F1</StatusText>
        <StatusPart $w={108}>Default</StatusPart>
        <StatusPart $w={102}>2018.11.22 01:10</StatusPart>
        {ohlc.map(([t, w]) => <StatusPart key={t} $w={w}>{t}</StatusPart>)}
        <StatusPart $w={121}>
          <Svg w={24} h={14}>
            {Array.from({ length: 8 }, (_, i) => (
              <g key={i}>
                <rect x={i * 3} y="0" width="2" height={10 - i} fill="#5a7a00" />
                <rect x={i * 3} y={11 - i} width="2" height={3 + i} fill="#00406b" />
              </g>
            ))}
          </Svg>
          1892640/654 kb
        </StatusPart>
      </StatusBar>
    </Page>
  );
}
